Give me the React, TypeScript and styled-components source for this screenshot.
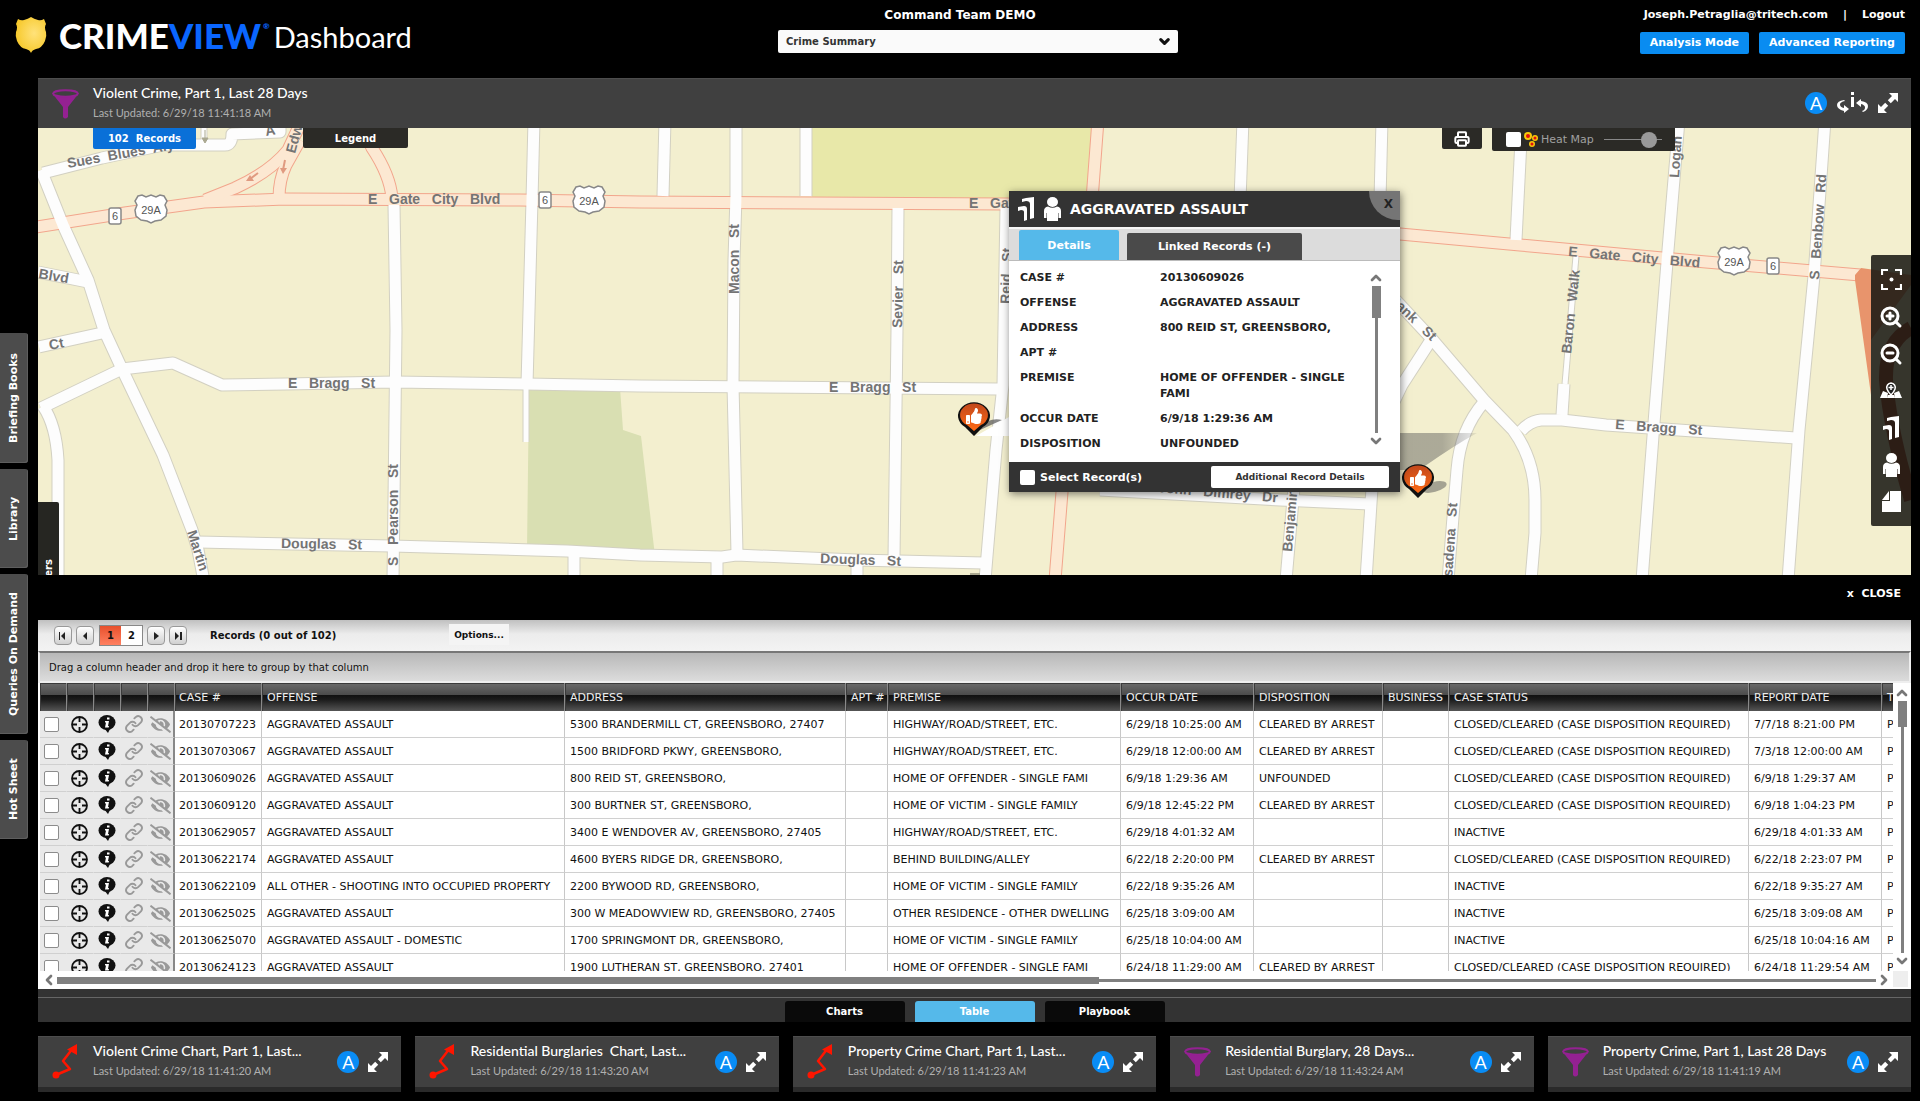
import React, { useState } from 'react';
import styled, { createGlobalStyle, css } from 'styled-components';
import { ChevronDown, ChevronLeft, ChevronRight, ChevronUp, Printer, ZoomIn, ZoomOut } from 'lucide-react';
import { FaEyeSlash, FaThumbsUp } from 'react-icons/fa';

const ui = `"DejaVu Sans", Verdana, sans-serif`;
const display = `Lato, "Open Sans", sans-serif`;

const GlobalStyle = createGlobalStyle`
  * { box-sizing: border-box; }
  body { margin: 0; background: #000; font-family: ${ui}; font-size: 11px; color: #111; }
  button, input, select { font: inherit; margin: 0; }
  button { border: 0; padding: 0; background: none; color: inherit; cursor: pointer; }
  a { color: inherit; text-decoration: none; }
  svg { display: block; flex: none; }
`;

/* ---------- page frame ---------- */

const Page = styled.div`
  min-height: 100vh;
  display: flex;
  flex-direction: column;
`;

const TopBar = styled.header`
  height: 78px;
  display: grid;
  grid-template-columns: 1fr 400px 1fr;
  padding: 0 15px 0 51px;
  color: #fff;
  font-weight: bold;
`;

const Brand = styled.div`
  display: flex;
  align-items: center;
  height: 70px;
  margin-left: -36px;
  font-family: ${display};
  color: #fff;
  white-space: nowrap;
`;

const BrandName = styled.span`
  margin-left: 12px;
  font-size: 35px;
  font-weight: 900;
  line-height: 40px;
  em { font-style: normal; color: #0a66ff; }
  sup { font-size: 8px; color: #0a66ff; vertical-align: 20px; line-height: 0; margin-left: 2px; }
`;

const BrandProduct = styled.span`
  margin-left: 4px;
  padding-top: 3px;
  font-size: 29px;
  font-weight: 400;
  line-height: 40px;
`;

const Center = styled.div`
  display: flex;
  flex-direction: column;
`;

const TeamName = styled.h1`
  margin: 0;
  padding: 5px 36px 5px 0;
  font-size: 12px;
  line-height: 20px;
  text-align: center;
`;

const SelectBox = styled.label`
  position: relative;
  display: block;
  color: #111;
  svg { position: absolute; right: 6px; top: 4px; pointer-events: none; }
`;

const Select = styled.select`
  appearance: none;
  display: block;
  width: 100%;
  height: 23px;
  padding: 0 8px;
  border: 0;
  border-radius: 2px;
  background: #fafafa;
  color: #333;
  font-size: 10px;
  font-weight: bold;
`;

const Account = styled.div`
  display: flex;
  flex-direction: column;
  align-items: flex-end;
  gap: 7px;
  padding-top: 5px;
`;

const AccountRow = styled.div<{ $gap: number }>`
  display: flex;
  gap: ${p => p.$gap}px;
  line-height: 20px;
`;

const BlueButton = styled.button`
  height: 22px;
  padding: 0 10px;
  border-radius: 2px;
  background: #098cf1;
  color: #fff;
  font-weight: bold;
`;

const Body = styled.div`
  flex: 1;
  display: grid;
  grid-template-columns: 38px minmax(0, 1fr);
`;

const SideTabs = styled.nav`
  display: flex;
  flex-direction: column;
  justify-content: center;
  align-items: flex-start;
  gap: 6px;
  padding-bottom: 7px;
`;

const SideTab = styled.button<{ $h: number }>`
  width: 28px;
  height: ${p => p.$h}px;
  border-radius: 3px 0 0 3px;
  background: #4c4c4c;
  box-shadow: inset 1px 1px 0 #5e5e5e;
  color: #fff;
  font-weight: bold;
  line-height: 28px;
  text-align: center;
  writing-mode: vertical-rl;
  transform: rotate(180deg);
`;

const Main = styled.main`
  display: flex;
  flex-direction: column;
  padding: 0 9px 9px 0;
`;

/* ---------- widget title ---------- */

const WidgetBar = styled.section<{ $card?: boolean }>`
  display: flex;
  align-items: center;
  height: ${p => (p.$card ? 56 : 50)}px;
  padding: 0 13px 0 14px;
  background: #404040;
  border-top: 1px solid #4d4d4d;
  ${p => p.$card && css`border-bottom: 5px solid #2a2a2a; flex: 1;`}
  color: #fff;
  font-family: ${display};
  min-width: 0;
`;

const WidgetText = styled.div`
  flex: 1;
  min-width: 0;
  margin-left: 14px;
  padding-bottom: 2px;
  white-space: nowrap;
  h2 { margin: 0; font-size: 14px; line-height: 20px; font-weight: 500; }
  p { margin: 0; font-size: 11px; line-height: 20px; color: #b0b0b0; }
`;

const WidgetTools = styled.div<{ $gap: number }>`
  display: flex;
  align-items: center;
  gap: ${p => p.$gap}px;
  padding-bottom: 1px;
`;

const AutoBadge = styled.button`
  width: 22px;
  height: 22px;
  border-radius: 50%;
  background: #098cf5;
  color: #fff;
  font-family: ${display};
  font-size: 18px;
  line-height: 22px;
  text-align: center;
`;

/* ---------- map ---------- */

const MapArea = styled.section`
  position: relative;
  flex: 1;
  min-height: 440px;
  overflow: hidden;
  background: #f3efcf;
`;

const MapCanvas = styled.svg`
  position: absolute;
  inset: 0;
  width: 100%;
  height: 100%;
  text { font-family: "Liberation Sans", Arial, sans-serif; font-weight: bold; font-size: 14px; fill: #747474; white-space: pre; }
  .shield { font-weight: normal; font-size: 11px; fill: #555; }
`;

const MapTools = styled.div`
  position: relative;
  display: flex;
  align-items: flex-start;
  padding: 0 236px 0 55px;
`;

const MapButton = styled.button<{ $w: number; $h: number; $blue?: boolean }>`
  display: flex;
  align-items: center;
  justify-content: center;
  width: ${p => p.$w}px;
  height: ${p => p.$h}px;
  border-radius: 0 0 2px 2px;
  background: ${p => (p.$blue ? '#0a70d8' : '#2b2a26')};
  color: #fff;
  font-weight: bold;
  font-size: 10px;
  white-space: pre;
`;

const Spacer = styled.div<{ $w?: number }>`
  ${p => (p.$w ? css`width: ${p.$w}px;` : css`flex: 1;`)}
`;

const HeatTool = styled.div`
  display: flex;
  align-items: center;
  width: 183px;
  height: 23px;
  padding: 0 13px 0 14px;
  border-radius: 0 0 2px 2px;
  background: #2b2a26;
  color: #a0a0a0;
  label { display: flex; align-items: center; gap: 3px; flex: 1; white-space: nowrap; }
`;

const Check = styled.input<{ $outlined?: boolean }>`
  appearance: none;
  display: block;
  width: 15px;
  height: 15px;
  border-radius: 2px;
  background: #fff;
  flex: none;
  ${p => p.$outlined && css`border: 1px solid #8c8c8c;`}
  &:checked { background: #57bbec; }
`;

const Slider = styled.input`
  appearance: none;
  width: 58px;
  height: 16px;
  background: linear-gradient(#888, #888) center / 100% 1px no-repeat;
  &::-webkit-slider-thumb { appearance: none; width: 16px; height: 16px; border-radius: 50%; background: #999; }
`;

const ToolRail = styled.div`
  position: absolute;
  right: 0;
  top: 127px;
  width: 40px;
  padding: 6px 0;
  display: flex;
  flex-direction: column;
  border-radius: 2px 0 0 2px;
  background: rgba(22, 22, 18, 0.86);
  color: #fff;
  button { display: flex; align-items: center; justify-content: center; height: 37px; }
`;

const LayersTab = styled.button`
  position: absolute;
  left: 0;
  bottom: -21px;
  width: 21px;
  height: 94px;
  border-radius: 2px 0 0 2px;
  background: #262622;
  color: #fff;
  font-size: 10px;
  font-weight: bold;
  line-height: 21px;
  text-align: left;
  writing-mode: vertical-rl;
  transform: rotate(180deg);
`;

/* ---------- record popup ---------- */

const Popup = styled.article`
  position: absolute;
  left: 971px;
  top: 63px;
  width: 391px;
  background: #fff;
  box-shadow: 1px 2px 8px rgba(0, 0, 0, 0.5);
  font-weight: bold;
  color: #222;
`;

const PopupHead = styled.header`
  position: relative;
  display: flex;
  align-items: center;
  gap: 9px;
  height: 36px;
  padding: 0 9px;
  overflow: hidden;
  background: #333;
  color: #fff;
  h3 { margin: 0; font-size: 14px; line-height: 36px; }
`;

const PopupClose = styled.button`
  position: absolute;
  right: 0;
  top: 0;
  width: 31px;
  height: 29px;
  padding: 0 7px 4px 0;
  border-bottom-left-radius: 31px;
  background: #757575;
  color: #222;
  font-size: 12px;
  font-weight: bold;
  text-align: right;
`;

const PopupTabs = styled.div`
  display: flex;
  align-items: flex-end;
  gap: 8px;
  height: 34px;
  padding: 0 10px;
  border-top: 2px solid #f4f4f4;
  border-bottom: 1px solid #bbb;
  background: #dcdcdc;
`;

const PopupTab = styled.button<{ $active?: boolean }>`
  width: ${p => (p.$active ? 100 : 175)}px;
  height: ${p => (p.$active ? 30 : 27)}px;
  border-radius: 2px 2px 0 0;
  background: ${p => (p.$active ? '#55b9ea' : '#4a4a4a')};
  color: #fff;
  font-weight: bold;
`;

const PopupBody = styled.div`
  display: flex;
  height: 201px;
  padding: 4px 16px 0 11px;
`;

const Fields = styled.dl`
  flex: 1;
  margin: 0;
  display: grid;
  grid-template-columns: 140px 190px;
  align-content: start;
  line-height: 16px;
  dt, dd { margin: 0; padding: 5px 0 4px; }
`;

const VScroll = styled.div<{ $thumb: number }>`
  display: flex;
  flex-direction: column;
  align-items: center;
  flex: 1;
  padding: 2px 0;
  color: #777;
  i { width: 9px; height: ${p => p.$thumb}px; background: #808080; }
  b { flex: 1; width: 3px; background: #808080; }
`;

const PopupScroll = styled.div`
  display: flex;
  width: 16px;
  padding: 3px 0 11px;
`;

const PopupFoot = styled.footer`
  display: flex;
  align-items: center;
  justify-content: space-between;
  height: 30px;
  padding: 0 11px;
  background: #333;
  color: #fff;
  label { display: flex; align-items: center; gap: 5px; }
  button { width: 178px; height: 22px; border-radius: 2px; background: #fff; color: #333; font-size: 9px; font-weight: bold; }
`;

/* ---------- record grid ---------- */

const CloseRow = styled.div`
  display: flex;
  justify-content: flex-end;
  height: 45px;
  padding: 8px 10px;
  button { height: 20px; color: #fff; font-weight: bold; white-space: pre; }
`;

const Pager = styled.div`
  display: flex;
  align-items: center;
  height: 31px;
  padding: 0 16px;
  background: linear-gradient(#c0c0c0, #ececec 45%, #f3f3f3);
  font-size: 10px;
  font-weight: bold;
`;

const PagerButton = styled.button`
  display: flex;
  align-items: center;
  justify-content: center;
  width: 18px;
  height: 19px;
  margin-right: 4px;
  border: 1px solid #999;
  border-radius: 4px;
  background: linear-gradient(#fff, #d0d0d0);
`;

const PageNumbers = styled.div`
  display: flex;
  margin: 0 4px 0 1px;
  border: 1px solid #888;
`;

const PageNumber = styled.button<{ $active?: boolean }>`
  width: 21px;
  height: 19px;
  background: ${p => (p.$active ? 'linear-gradient(#e8502c, #ff8060)' : '#fff')};
  font-weight: bold;
`;

const RecordCount = styled.span`
  margin-left: 19px;
  width: 239px;
`;

const OptionsButton = styled.button`
  width: 60px;
  height: 21px;
  margin-bottom: 2px;
  background: #f4f4f4;
  font-size: 9px;
  font-weight: bold;
`;

const GroupHint = styled.div`
  height: 32px;
  padding: 0 9px;
  border: 2px solid #eee;
  border-top-color: #777;
  background: linear-gradient(#b8b8b8, #dcdcdc);
  font-size: 10px;
  line-height: 30px;
`;

const GridArea = styled.div`
  display: grid;
  grid-template-columns: minmax(0, 1fr) 18px;
  grid-template-rows: 288px 18px;
  padding-left: 2px;
  background: #fff;
`;

const GridScroll = styled.div`
  overflow: hidden;
`;

const Table = styled.table`
  width: 100%;
  min-width: 1980px;
  table-layout: fixed;
  border-collapse: separate;
  border-spacing: 0;
  th, td { padding: 0 0 0 5px; white-space: nowrap; text-align: left; }
  th:nth-child(-n + 6), td:nth-child(-n + 6) { padding-left: 4px; }
  td:nth-child(5) { padding-left: 2px; }
`;

const Th = styled.th`
  height: 28px;
  border-right: 1px solid #8a8a8a;
  box-shadow: inset 1px 1px 0 #3a3a3a;
  background: linear-gradient(#6a6a6a, #4c4c4c 42%, #111 44%, #1c1c1c 60%, #555);
  color: #eee;
  font-weight: normal;
`;

const Td = styled.td<{ $tool?: boolean }>`
  height: 27px;
  border-right: 1px solid #c8c8c8;
  border-bottom: 1px solid #d0d0d0;
  color: #111;
  ${p => p.$tool && css`
    border-right-color: transparent;
    background: #e9e9e9;
    &:nth-child(5) { border-right: 2px solid #888; }
  `}
`;

const IconButton = styled.button`
  display: block;
`;

const HScroll = styled.div`
  display: flex;
  align-items: center;
  padding: 0 1px;
  color: #777;
  i { flex: 573; height: 7px; background: #808080; }
  b { flex: 427; height: 3px; background: #808080; }
`;

const Corner = styled.div`
  margin: 0 3px 2px 0;
  background: #eee;
`;

const ViewTabs = styled.div`
  display: flex;
  align-items: flex-end;
  justify-content: center;
  gap: 10px;
  height: 33px;
  background: linear-gradient(#333 8px, #666 8px, #666 9px, #333 9px);
`;

const ViewTab = styled.button<{ $active?: boolean }>`
  width: 120px;
  height: 21px;
  border-radius: 3px 3px 0 0;
  background: ${p => (p.$active ? '#55b9ea' : '#0a0a0a')};
  color: #fff;
  font-size: 10px;
  font-weight: bold;
`;

const Cards = styled.div`
  display: flex;
  gap: 14px;
  margin-top: 14px;
`;

/* ---------- drawings ---------- */

const Shield = () => (
  <svg width="32" height="36" viewBox="0 0 32 36">
    <defs>
      <radialGradient id="gold" cx=".6" cy=".45" r=".6">
        <stop offset="0" stopColor="#ffe27a" />
        <stop offset="1" stopColor="#f7c92c" />
      </radialGradient>
    </defs>
    <path d="M3 2q3 2 6 1 4-1 7-3 3 2 7 3 3 1 6-1l2 5q-2 3 0 8 1 4-1 9-3 7-9 8-4 1-5 4-1-3-5-4-6-1-9-8-2-5-1-9 2-5 0-8z" fill="url(#gold)" />
  </svg>
);

const Funnel = () => (
  <svg width="27" height="30" viewBox="0 0 27 30">
    <path d="M0 4l11 14v10q2 3 5 0V18L27 4z" fill="#942192" />
    <ellipse cx="13.500" cy="4.500" rx="12.300" ry="3.300" fill="#404040" stroke="#942192" strokeWidth="2" />
  </svg>
);

const Trend = () => (
  <svg width="27" height="36" viewBox="0 0 27 36">
    <path d="M4 31l14-6-7-8 10-13" fill="none" stroke="#ff1500" strokeWidth="2.500" strokeLinejoin="round" />
    <circle cx="4" cy="31" r="3.500" fill="#ff1500" />
    <path d="M25 0v11L15 5.500z" fill="#ff1500" />
  </svg>
);

const Expand = () => (
  <svg width="20" height="20" viewBox="0 0 20 20" fill="#fff">
    <path d="M11 0h9v9l-3-3-4.200 4.200-3-3L14 3zM9 20H0v-9l3 3 4.200-4.200 3 3L6 17z" />
  </svg>
);

const RotateInfo = () => (
  <svg width="31" height="22" viewBox="0 0 31 22" fill="#fff">
    <rect x="14" y="5" width="3" height="10" />
    <rect x="14" y="0" width="3" height="3" />
    <path d="M7 8Q0 9 0 13t7 6v2l5-4-5-4v3q-4-1-4-3.500T8 9z" />
    <path d="M26 20q5-2 5-6t-7-5V7l-5 4 5 4v-3q4 1 4 3.500T25 19z" />
  </svg>
);

const Target = () => (
  <svg width="17" height="17" viewBox="0 0 17 17" fill="none" stroke="#111" strokeWidth="1.800">
    <circle cx="8.500" cy="8.500" r="7.500" />
    <path d="M8.500 1v5M8.500 11v5M1 8.500h5M11 8.500h5" />
  </svg>
);

const InfoPin = () => (
  <svg width="18" height="18" viewBox="0 0 18 18">
    <ellipse cx="9" cy="7.500" rx="8.500" ry="7.500" fill="#111" />
    <path d="M6 13l4 5 2-4z" fill="#111" />
    <path d="M9 2.500h2.500v2H9zM7 6h4l-1 5h1l-.3 1.500H7l1-5H7z" fill="#fff" />
  </svg>
);

const Chain = () => (
  <svg width="18" height="18" viewBox="0 0 24 24" fill="none" stroke="#999" strokeWidth="2.500" strokeLinecap="round">
    <path d="M10 13a5 5 0 0 0 7.500.5l4-4a5 5 0 0 0-7-7l-2 2" />
    <path d="M14 11a5 5 0 0 0-7.500-.5l-4 4a5 5 0 0 0 7 7l2-2" />
  </svg>
);

const Person = () => (
  <svg width="17" height="24" viewBox="0 0 17 24" fill="currentColor">
    <ellipse cx="8.500" cy="5" rx="5.500" ry="5" />
    <path d="M4 9.500Q8.500 12 13 9.500 17 10 17 14V21H14.500V16H14V24H3V16H2.500V21H0V14Q0 10 4 9.500z" />
  </svg>
);

const Pages = () => (
  <svg width="17" height="24" viewBox="0 0 17 24" fill="currentColor">
    <path d="M4 2L8 1 16 0V21L12 22V7Q12 4 8 4L4 5z" />
    <path d="M0 10L6 9Q9 9 9 12V23L6 24V15Q6 13 3 13L0 14z" />
  </svg>
);

const Frame = () => (
  <svg width="21" height="21" viewBox="0 0 21 21" fill="none" stroke="#fff" strokeWidth="2.200">
    <path d="M1 6V1h6M14 1h6v5M20 15v5h-6M7 20H1v-5" />
    <circle cx="10.500" cy="10.500" r="2" fill="#fff" stroke="none" />
  </svg>
);

const MapPinTool = () => (
  <svg width="22" height="17" viewBox="0 0 22 17" fill="#fff">
    <path d="M3 9l-3 7h7l1-5zM19 9l3 7h-7l-1-5zM8 13l-1 3h8l-1-3z" />
    <path d="M11 1a4.500 4.500 0 0 1 4 6q-1 3-4 6-3-3-4-6a4.500 4.500 0 0 1 4-6z" stroke="#fff" strokeWidth="1.500" fill="#222" />
    <path d="M11 3v5M8.500 5.500h5" stroke="#fff" strokeWidth="1.500" />
  </svg>
);

const Note = () => (
  <svg width="19" height="21" viewBox="0 0 19 21" fill="#fff">
    <path d="M8 0h11v21H0V10h8z" />
    <path d="M7 0v9H0z" />
  </svg>
);

const HeatDots = () => (
  <svg width="14" height="15" viewBox="0 0 14 15">
    {[[4, 4, 4], [11, 6, 3], [8, 12, 3]].map(([x, y, r]) => (
      <g key={x}>
        <circle cx={x} cy={y} r={r} fill="#f7c80a" />
        <circle cx={x} cy={y} r={r / 2} fill="#e01010" />
      </g>
    ))}
  </svg>
);

const PagerGlyph = ({ d }: { d: string }) => (
  <svg width="10" height="10" viewBox="0 0 10 10" fill="#222"><path d={d} /></svg>
);

/* ---------- street map ---------- */

const streets = [
  'M41 170L63 225 88 280 104 330 122 369 163 455 192 530 198 550 203 576',
  'M38 272L88 282',
  'M39 347L102 333',
  'M41 408L122 369 173 363 222 385 286 384 395 382 526 384 640 386 999 389',
  'M43 406Q56 425 58 460V580',
  'M43 173L102 158 163 145H225Q232 145 232 134L280 132V120',
  'M394 205L396 330 394 500 393 580',
  'M534 120L532 200 527 385',
  'M665 120L663 196',
  'M736 120V196L734 260 733 385 737 553',
  'M806 120V196',
  'M898 208L897 330 894 558',
  'M1006 208L1003 385 996 450 987 556 985 580',
  'M1243 120L1240 200',
  'M1382 120L1380 200',
  'M1522 120L1516 240',
  'M1679 120L1668 250 1655 410 1642 580',
  'M1825 120L1814 276 1799 430 1788 580',
  'M1521 431Q1530 421 1541 420L1562 420 1606 425 1796 438',
  'M1564 384L1562 415',
  'M1390 294L1431 338 1484 400 1513 430Q1535 460 1535 500V533L1531 580',
  'M1431 340L1402 385 1390 410',
  'M1484 402Q1460 430 1457 470L1453 517 1448 580',
  'M1100 490L1280 500 1370 504',
  'M1294 488L1286 580',
  'M1372 488L1366 580',
  'M198 542L392 546 567 551 640 555 722 557 736 555 856 560 984 563',
  'M574 552V580',
  'M717 560V580',
  'M857 560V580',
];
const lanes = ['M526 384V442', 'M1576 256L1565 384', 'M204 126V144'];
const highways = [
  'M30 228L125 213 204 202 285 199 520 200 640 202 1007 204 1400 234 1520 245 1706 262 1860 275',
  'M302 120L288 150Q270 172 235 188L205 200',
  'M300 140L286 165Q279 180 279 198',
  'M360 120L372 148Q390 175 392 198',
  'M1098 120L1092 200 1062 492 1055 580',
];
const labels: [number, number, number, string][] = [
  [368, 204, 0, 'E   Gate   City   Blvd'],
  [68, 168, -10, 'Sues  Blues  Aly'],
  [295, 154, -75, 'Edw'],
  [266, 136, -10, 'A'],
  [38, 278, 10, 'Blvd'],
  [50, 350, -12, 'Ct'],
  [288, 388, 0, 'E   Bragg   St'],
  [829, 392, 0, 'E   Bragg   St'],
  [281, 548, 1, 'Douglas   St'],
  [820, 563, 2, 'Douglas   St'],
  [398, 566, -90, 'S   Pearson   St'],
  [187, 532, 72, 'Martin'],
  [739, 294, -90, 'Macon   St'],
  [902, 328, -89, 'Sevier   St'],
  [1010, 304, -88, 'Reid   St'],
  [969, 208, 0, 'E   Gate   City'],
  [1568, 256, 5, 'E   Gate   City   Blvd'],
  [1679, 178, -86, 'Logan'],
  [1819, 280, -86, 'S   Benbow   Rd'],
  [1571, 354, -84, 'Baron   Walk'],
  [1388, 300, 44, 'Bank   St'],
  [1615, 429, 4, 'E   Bragg   St'],
  [1158, 492, 5, 'John   Dimrey   Dr'],
  [1292, 552, -85, 'Benjamin'],
  [1451, 594, -86, 'Pasadena   St'],
];
const shields: [number, number][] = [[151, 209], [589, 200], [1734, 261]];
const routes: [number, number][] = [[115, 216], [545, 200], [1773, 266]];

const Marker = ({ x, y }: { x: number; y: number }) => (
  <g transform={`translate(${x} ${y})`}>
    <path d="M0 20L-9 11A16 13.500 0 1 1 9 11z" fill="#111" />
    <path d="M0 15L-7 9A14 11.500 0 1 1 7 9z" fill="url(#pin)" />
    <FaThumbsUp x={-8} y={-8} width={16} height={16} size={16} color="#fff" />
  </g>
);

const StreetMap = () => (
  <MapCanvas viewBox="38 128 1873 448" preserveAspectRatio="xMinYMin slice" aria-label="Street map">
    <defs>
      <linearGradient id="pin" x1="0" y1="0" x2="0" y2="1">
        <stop offset="0" stopColor="#c2481c" />
        <stop offset="1" stopColor="#ff6a14" />
      </linearGradient>
      <linearGradient id="shade" x1="0" y1="0" x2="1" y2="0">
        <stop offset="0" stopColor="#555" stopOpacity=".45" />
        <stop offset=".6" stopColor="#555" stopOpacity=".45" />
        <stop offset="1" stopColor="#555" stopOpacity=".1" />
      </linearGradient>
    </defs>
    <path d="M812 128H1092L1090 200H812z" fill="#e8e8a9" />
    <path d="M529 388H620L623 430 641 436 655 556 527 550z" fill="#d9dfb2" />
    <g fill="none" strokeLinejoin="round">
      {streets.map(d => <path key={d} d={d} stroke="#d2d0c2" strokeWidth="13" />)}
      {lanes.map(d => <path key={d} d={d} stroke="#d2d0c2" strokeWidth="7" />)}
      {highways.map(d => <path key={d} d={d} stroke="#f2a58c" strokeWidth="13" />)}
      {highways.map(d => <path key={d} d={d} stroke="#fce8d2" strokeWidth="11" />)}
      {streets.map(d => <path key={d} d={d} stroke="#fdfdfd" strokeWidth="11" />)}
      {lanes.map(d => <path key={d} d={d} stroke="#fdfdfd" strokeWidth="5" />)}
    </g>
    <path d="M212 128h11v10h-11z" fill="#f3efcf" />
    <path d="M205 130v10M202 138l3 5 3-5z" fill="#aaa890" stroke="#aaa890" />
    <path d="M258 173l-8 6M285 160l-2 10" stroke="#e09a80" strokeWidth="2" />
    <path d="M246 181l8 0-4-6zM280 168h7l-4 6z" fill="#e09a80" />
    <path d="M1855 275L1861 268 1911 275V285L1871 340V395Q1862 330 1855 280z" fill="#e8946c" />
    <path d="M1911 328Q1885 342 1886 380 1890 430 1911 500" fill="none" stroke="#b04a30" strokeWidth="14" />
    {shields.map(([x, y]) => (
      <g key={x} transform={`translate(${x} ${y})`}>
        <path d="M-13-13l4-1 4 2 5-2 5 2 4-2 4 1 3 5-2 4 2 5-1 6-5 4-6 1-4 2-4-2-6-1-5-4-1-6 2-5-2-4z" fill="#fff" stroke="#888" strokeWidth="1.500" />
        <text className="shield" textAnchor="middle" y="5">29A</text>
      </g>
    ))}
    {routes.map(([x, y]) => (
      <g key={x} transform={`translate(${x} ${y})`}>
        <rect x="-6" y="-8" width="12" height="16" rx="2" fill="#fff" stroke="#888" strokeWidth="1.500" />
        <text className="shield" textAnchor="middle" y="4">6</text>
      </g>
    ))}
    {labels.map(([x, y, r, t]) => <text key={`${x}-${y}`} transform={`translate(${x} ${y}) rotate(${r})`}>{t}</text>)}
    <rect x="970" y="573" width="10" height="3" fill="#aaa890" />
    <path d="M980 430L988 421Q995 418 1002 420z" fill="#555" opacity=".7" />
    <path d="M976 436L1009 417V436z" fill="#fff" />
    <Marker x={974} y={416} />
    <path d="M1390 433H1477Q1455 445 1425 466L1415 470H1390z" fill="url(#shade)" />
    <ellipse cx="1434" cy="487" rx="13" ry="5" fill="#555" opacity=".5" transform="rotate(-15 1434 487)" />
    <Marker x={1418} y={478} />
  </MapCanvas>
);

/* ---------- data ---------- */

const fields: [string, string][] = [
  ['CASE #', '20130609026'],
  ['OFFENSE', 'AGGRAVATED ASSAULT'],
  ['ADDRESS', '800 REID ST, GREENSBORO,'],
  ['APT #', ''],
  ['PREMISE', 'HOME OF OFFENDER - SINGLE FAMI'],
  ['OCCUR DATE', '6/9/18 1:29:36 AM'],
  ['DISPOSITION', 'UNFOUNDED'],
];

const columns: [string, number][] = [
  ['CASE #', 87], ['OFFENSE', 303], ['ADDRESS', 281], ['APT #', 42], ['PREMISE', 233], ['OCCUR DATE', 133],
  ['DISPOSITION', 129], ['BUSINESS', 66], ['CASE STATUS', 300], ['REPORT DATE', 133], ['T', 0],
];

const AA = 'AGGRAVATED ASSAULT';
const CBA = 'CLEARED BY ARREST';
const CC = 'CLOSED/CLEARED (CASE DISPOSITION REQUIRED)';
const rows = [
  ['20130707223', AA, '5300 BRANDERMILL CT, GREENSBORO, 27407', '', 'HIGHWAY/ROAD/STREET, ETC.', '6/29/18 10:25:00 AM', CBA, '', CC, '7/7/18 8:21:00 PM', 'P'],
  ['20130703067', AA, '1500 BRIDFORD PKWY, GREENSBORO,', '', 'HIGHWAY/ROAD/STREET, ETC.', '6/29/18 12:00:00 AM', CBA, '', CC, '7/3/18 12:00:00 AM', 'P'],
  ['20130609026', AA, '800 REID ST, GREENSBORO,', '', 'HOME OF OFFENDER - SINGLE FAMI', '6/9/18 1:29:36 AM', 'UNFOUNDED', '', CC, '6/9/18 1:29:37 AM', 'P'],
  ['20130609120', AA, '300 BURTNER ST, GREENSBORO,', '', 'HOME OF VICTIM - SINGLE FAMILY', '6/9/18 12:45:22 PM', CBA, '', CC, '6/9/18 1:04:23 PM', 'P'],
  ['20130629057', AA, '3400 E WENDOVER AV, GREENSBORO, 27405', '', 'HIGHWAY/ROAD/STREET, ETC.', '6/29/18 4:01:32 AM', '', '', 'INACTIVE', '6/29/18 4:01:33 AM', 'P'],
  ['20130622174', AA, '4600 BYERS RIDGE DR, GREENSBORO,', '', 'BEHIND BUILDING/ALLEY', '6/22/18 2:20:00 PM', CBA, '', CC, '6/22/18 2:23:07 PM', 'P'],
  ['20130622109', 'ALL OTHER - SHOOTING INTO OCCUPIED PROPERTY', '2200 BYWOOD RD, GREENSBORO,', '', 'HOME OF VICTIM - SINGLE FAMILY', '6/22/18 9:35:26 AM', '', '', 'INACTIVE', '6/22/18 9:35:27 AM', 'P'],
  ['20130625025', AA, '300 W MEADOWVIEW RD, GREENSBORO, 27405', '', 'OTHER RESIDENCE - OTHER DWELLING', '6/25/18 3:09:00 AM', '', '', 'INACTIVE', '6/25/18 3:09:08 AM', 'P'],
  ['20130625070', 'AGGRAVATED ASSAULT - DOMESTIC', '1700 SPRINGMONT DR, GREENSBORO,', '', 'HOME OF VICTIM - SINGLE FAMILY', '6/25/18 10:04:00 AM', '', '', 'INACTIVE', '6/25/18 10:04:16 AM', 'P'],
  ['20130624123', AA, '1900 LUTHERAN ST, GREENSBORO, 27401', '', 'HOME OF OFFENDER - SINGLE FAMI', '6/24/18 11:29:00 AM', CBA, '', CC, '6/24/18 11:29:54 AM', 'P'],
];

const cards = [
  { icon: 'trend', title: 'Violent Crime Chart, Part 1, Last...', at: '6/29/18 11:41:20 AM' },
  { icon: 'trend', title: 'Residential Burglaries\u00a0 Chart, Last...', at: '6/29/18 11:43:20 AM' },
  { icon: 'trend', title: 'Property Crime Chart, Part 1, Last...', at: '6/29/18 11:41:23 AM' },
  { icon: 'funnel', title: 'Residential Burglary, 28 Days...', at: '6/29/18 11:43:24 AM' },
  { icon: 'funnel', title: 'Property Crime, Part 1, Last 28 Days', at: '6/29/18 11:41:19 AM' },
];

const Widget = ({ icon, title, at, card }: { icon: string; title: string; at: string; card?: boolean }) => (
  <WidgetBar $card={card}>
    {icon === 'funnel' ? <Funnel /> : <Trend />}
    <WidgetText>
      <h2>{title}</h2>
      <p>Last Updated: {at}</p>
    </WidgetText>
    <WidgetTools $gap={card ? 9 : 10}>
      <AutoBadge>A</AutoBadge>
      {!card && <IconButton aria-label="Rotate information"><RotateInfo /></IconButton>}
      <IconButton aria-label="Expand"><Expand /></IconButton>
    </WidgetTools>
  </WidgetBar>
);

export default function App() {
  const [view, setView] = useState('Table');
  return (
    <Page>
      <GlobalStyle />
      <TopBar>
        <Brand>
          <Shield />
          <BrandName>CRIME<em>VIEW</em><sup>®</sup></BrandName>
          <BrandProduct>Dashboard</BrandProduct>
        </Brand>
        <Center>
          <TeamName>Command Team DEMO</TeamName>
          <SelectBox>
            <Select aria-label="Dashboard page"><option>Crime Summary</option></Select>
            <ChevronDown size={15} strokeWidth={5} />
          </SelectBox>
        </Center>
        <Account>
          <AccountRow $gap={15}>
            <a href="#account">Joseph.Petraglia@tritech.com</a>
            <span>|</span>
            <a href="#logout">Logout</a>
          </AccountRow>
          <AccountRow $gap={10}>
            <BlueButton>Analysis Mode</BlueButton>
            <BlueButton>Advanced Reporting</BlueButton>
          </AccountRow>
        </Account>
      </TopBar>
      <Body>
        <SideTabs>
          <SideTab $h={130}>Briefing Books</SideTab>
          <SideTab $h={99}>Library</SideTab>
          <SideTab $h={160}>Queries On Demand</SideTab>
          <SideTab $h={99}>Hot Sheet</SideTab>
        </SideTabs>
        <Main>
          <Widget icon="funnel" title="Violent Crime, Part 1, Last 28 Days" at="6/29/18 11:41:18 AM" />
          <MapArea>
            <StreetMap />
            <MapTools>
              <MapButton $w={103} $h={21} $blue>102  Records</MapButton>
              <Spacer $w={107} />
              <MapButton $w={105} $h={20}>Legend</MapButton>
              <Spacer />
              <MapButton $w={40} $h={21} aria-label="Print"><Printer size={16} strokeWidth={3} /></MapButton>
              <Spacer $w={10} />
              <HeatTool>
                <label><Check type="checkbox" /><HeatDots />Heat Map</label>
                <Slider type="range" aria-label="Heat map intensity" defaultValue={88} />
              </HeatTool>
            </MapTools>
            <LayersTab>Layers</LayersTab>
            <ToolRail>
              <IconButton aria-label="Full extent"><Frame /></IconButton>
              <IconButton aria-label="Zoom in"><ZoomIn size={24} strokeWidth={3} /></IconButton>
              <IconButton aria-label="Zoom out"><ZoomOut size={24} strokeWidth={3} /></IconButton>
              <IconButton aria-label="Locate"><MapPinTool /></IconButton>
              <IconButton aria-label="Incidents"><Pages /></IconButton>
              <IconButton aria-label="Persons"><Person /></IconButton>
              <IconButton aria-label="Notes"><Note /></IconButton>
            </ToolRail>
            <Popup>
              <PopupHead>
                <Pages />
                <Person />
                <h3>AGGRAVATED ASSAULT</h3>
                <PopupClose>X</PopupClose>
              </PopupHead>
              <PopupTabs>
                <PopupTab $active>Details</PopupTab>
                <PopupTab>Linked Records (-)</PopupTab>
              </PopupTabs>
              <PopupBody>
                <Fields>
                  {fields.map(([k, v]) => (
                    <React.Fragment key={k}>
                      <dt>{k}</dt>
                      <dd>{v}</dd>
                    </React.Fragment>
                  ))}
                </Fields>
                <PopupScroll>
                  <VScroll $thumb={32}>
                    <ChevronUp size={16} strokeWidth={4} /><i /><b /><ChevronDown size={16} strokeWidth={4} />
                  </VScroll>
                </PopupScroll>
              </PopupBody>
              <PopupFoot>
                <label><Check type="checkbox" />Select Record(s)</label>
                <button>Additional Record Details</button>
              </PopupFoot>
            </Popup>
          </MapArea>
          <CloseRow><button>x  CLOSE</button></CloseRow>
          <Pager>
            <PagerButton aria-label="First page"><PagerGlyph d="M1 1h1v8H1zM7 1v8L3 5z" /></PagerButton>
            <PagerButton aria-label="Previous page"><PagerGlyph d="M7 1v8L3 5z" /></PagerButton>
            <PageNumbers>
              <PageNumber $active>1</PageNumber>
              <PageNumber>2</PageNumber>
            </PageNumbers>
            <PagerButton aria-label="Next page"><PagerGlyph d="M3 1l5 4-5 4z" /></PagerButton>
            <PagerButton aria-label="Last page"><PagerGlyph d="M2 1l4 4-4 4zM7 1h2v8H7z" /></PagerButton>
            <RecordCount>Records (0 out of 102)</RecordCount>
            <OptionsButton>Options...</OptionsButton>
          </Pager>
          <GroupHint>Drag a column header and drop it here to group by that column</GroupHint>
          <GridArea>
            <GridScroll>
              <Table>
                <colgroup>
                  {[27, 27, 27, 27, 27].map((w, i) => <col key={i} style={{ width: w }} />)}
                  {columns.map(([name, w]) => <col key={name} style={w ? { width: w } : undefined} />)}
                </colgroup>
                <thead>
                  <tr>
                    {[0, 1, 2, 3, 4].map(i => <Th key={i} />)}
                    {columns.map(([name]) => <Th key={name}>{name}</Th>)}
                  </tr>
                </thead>
                <tbody>
                  {rows.map(row => (
                    <tr key={row[0]}>
                      <Td $tool><Check $outlined type="checkbox" aria-label={`Select ${row[0]}`} /></Td>
                      <Td $tool><IconButton aria-label="Locate"><Target /></IconButton></Td>
                      <Td $tool><IconButton aria-label="Details"><InfoPin /></IconButton></Td>
                      <Td $tool><IconButton aria-label="Link"><Chain /></IconButton></Td>
                      <Td $tool><IconButton aria-label="Hide"><FaEyeSlash size={21} color="#999" /></IconButton></Td>
                      {row.map((cell, i) => <Td key={i}>{cell}</Td>)}
                    </tr>
                  ))}
                </tbody>
              </Table>
            </GridScroll>
            <VScroll $thumb={26}>
              <ChevronUp size={16} strokeWidth={4} /><i /><b /><ChevronDown size={16} strokeWidth={4} />
            </VScroll>
            <HScroll>
              <ChevronLeft size={16} strokeWidth={4} /><i /><b /><ChevronRight size={16} strokeWidth={4} />
            </HScroll>
            <Corner />
          </GridArea>
          <ViewTabs>
            {['Charts', 'Table', 'Playbook'].map(name => (
              <ViewTab key={name} $active={view === name} onClick={() => setView(name)}>{name}</ViewTab>
            ))}
          </ViewTabs>
          <Cards>
            {cards.map(c => <Widget key={c.title} card {...c} />)}
          </Cards>
        </Main>
      </Body>
    </Page>
  );
}
